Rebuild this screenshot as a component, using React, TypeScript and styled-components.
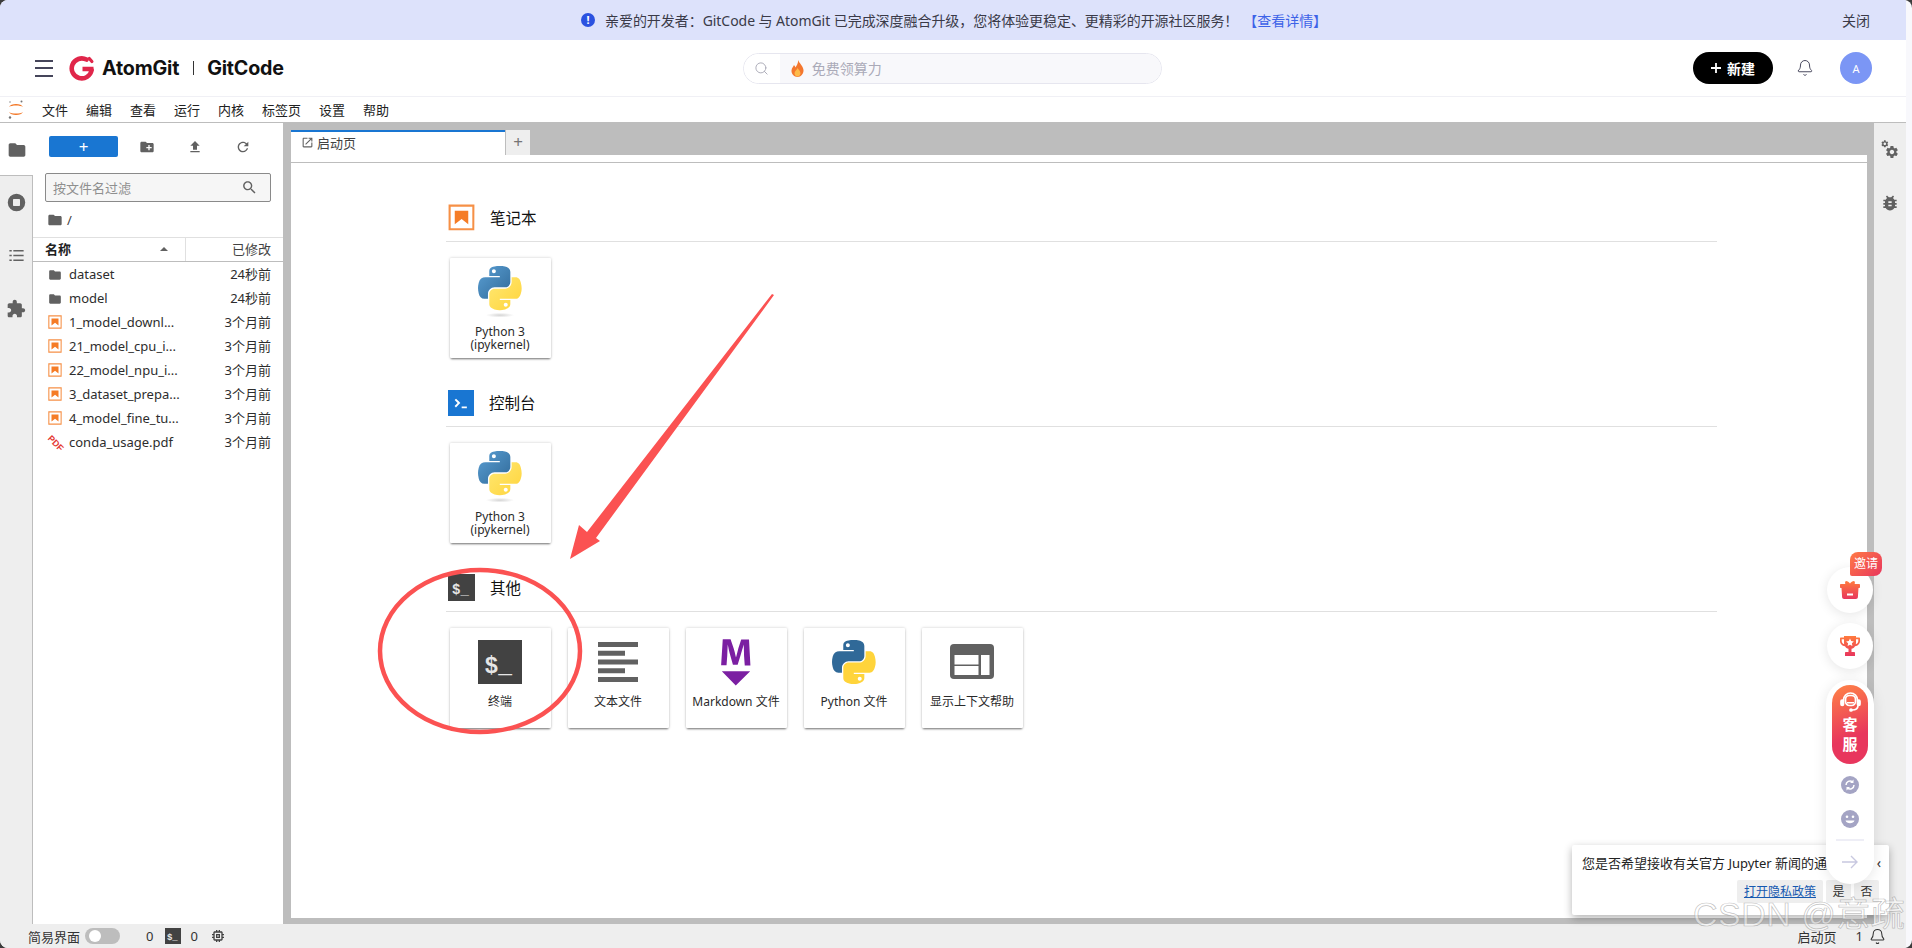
import React from 'react';
import styled, { createGlobalStyle } from 'styled-components';
import { Bell, Search } from 'lucide-react';

const FONT = '"Noto Sans", "Noto Sans CJK SC", sans-serif';

const GlobalStyle = createGlobalStyle`
  html, body {
    margin: 0;
    padding: 0;
    background: #3c3c3c;
  }
  #root {
    width: 1912px;
    height: 948px;
    overflow: hidden;
    border-radius: 8px;
  }
`;

const Page = styled.div`
  position: relative;
  width: 1912px;
  height: 948px;
  box-sizing: border-box;
  padding-right: 6px;
  background: #f8f8fc;
  font-family: ${FONT};
  color: #212121;
  display: flex;
  flex-direction: column;
  overflow: hidden;
`;

const Banner = styled.div`
  height: 40px;
  flex: none;
  background: #dde2fb;
  display: flex;
  align-items: center;
  box-sizing: border-box;
  padding: 0 36px 0 581px;
  font-size: 14px;
  letter-spacing: -0.05px;
  color: #3a3a48;
`;

const BannerDot = styled.span`
  width: 14px;
  height: 14px;
  border-radius: 50%;
  background: #2b52e0;
  color: #fff;
  font-size: 11px;
  font-weight: 700;
  line-height: 14px;
  text-align: center;
  margin-right: 10px;
`;

const BannerLink = styled.span`
  color: #3d63e8;
  margin-left: 5px;
`;

const BannerClose = styled.span`
  margin-left: auto;
`;

const Header = styled.header`
  height: 57px;
  flex: none;
  background: #fff;
  border-bottom: 1px solid #f0f0f5;
  box-sizing: border-box;
  display: flex;
  align-items: center;
  padding: 0 34px 0 35px;
`;

const Burger = styled.div`
  width: 18px;
  height: 17px;
  border-top: 2px solid #45455a;
  border-bottom: 2px solid #45455a;
  position: relative;
  box-sizing: border-box;
  margin-right: 16px;
  &::after {
    content: '';
    position: absolute;
    left: 0;
    right: 0;
    top: 5.5px;
    height: 2px;
    background: #45455a;
  }
`;

const LogoMark = styled.span`
  display: flex;
  margin-right: 7px;
`;

const Brand = styled.span`
  font-family: Inter, sans-serif;
  font-weight: 700;
  font-size: 19.7px;
  letter-spacing: -0.2px;
  color: #111;
`;

const BrandDivider = styled.span`
  width: 1px;
  height: 14px;
  background: #333;
  margin: 0 13px 0 14px;
`;

const SearchPill = styled.div`
  width: 419px;
  height: 31px;
  margin-left: 459px;
  border: 1px solid #e6e6ef;
  border-radius: 16px;
  box-sizing: border-box;
  overflow: hidden;
  display: flex;
  flex: none;
`;

const SearchLead = styled.div`
  width: 36px;
  flex: none;
  background: #fff;
  display: flex;
  align-items: center;
  justify-content: center;
  color: #a9a9b5;
`;

const SearchField = styled.div`
  flex: 1;
  background: #f8f8fb;
  display: flex;
  align-items: center;
  gap: 8px;
  padding-left: 11px;
  font-size: 14px;
  color: #aaaab8;
`;

const NewButton = styled.div`
  width: 80px;
  height: 32px;
  margin-left: auto;
  border-radius: 16px;
  background: #000;
  color: #fff;
  font-size: 14px;
  font-weight: 700;
  display: flex;
  align-items: center;
  justify-content: center;
  gap: 6px;
`;

const BellWrap = styled.div`
  margin: 0 26px 0 23px;
  color: #45455a;
  display: flex;
`;

const Avatar = styled.div`
  width: 32px;
  height: 32px;
  border-radius: 50%;
  background: #7b96f5;
  color: #fff;
  font-size: 11px;
  display: flex;
  align-items: center;
  justify-content: center;
`;

const MenuBar = styled.nav`
  height: 26px;
  flex: none;
  background: #fff;
  box-sizing: border-box;
  border-bottom: 1px solid #bdbdbd;
  display: flex;
  align-items: center;
  padding-left: 8px;
  font-size: 13px;
`;

const MenuLogo = styled.svg`
  width: 16px;
  height: 21px;
  margin-right: 9px;
  flex: none;
`;

const MenuItem = styled.span`
  padding: 0 9px;
`;

const Workspace = styled.div`
  flex: 1;
  min-height: 0;
  display: flex;
`;

const SideBar = styled.aside<{ $width: number }>`
  width: ${(p) => p.$width}px;
  flex: none;
  background: #eeeeee;
  display: flex;
  flex-direction: column;
`;

const SideTab = styled.div<{ $active?: boolean }>`
  height: 53px;
  display: flex;
  align-items: center;
  justify-content: center;
  box-sizing: border-box;
  color: #616161;
  background: ${(p) => (p.$active ? '#fff' : 'transparent')};
`;

const SideRest = styled.div`
  flex: 1;
  display: flex;
  flex-direction: column;
  border-top: 1px solid #bdbdbd;
  border-right: 1px solid #bdbdbd;
  margin-top: -1px;
`;

const FilePanel = styled.section`
  width: 250px;
  flex: none;
  background: #fff;
  display: flex;
  flex-direction: column;
  font-size: 13px;
`;

const FileToolbar = styled.div`
  display: flex;
  align-items: center;
  height: 21px;
  margin: 13px 0 0 16px;
  color: #616161;
`;

const BlueButton = styled.div`
  width: 72px;
  height: 21px;
  border-radius: 2px;
  background: #1976d2;
  color: #fff;
  font-size: 17px;
  line-height: 21px;
  text-align: center;
  margin-right: 21px;
`;

const ToolIcon = styled.div`
  width: 16px;
  height: 16px;
  margin-right: 32px;
  display: flex;
`;

const FilterBox = styled.div`
  height: 29px;
  margin: 16px 12px 0 12px;
  box-sizing: border-box;
  border: 1px solid #8a8a8a;
  border-radius: 2px;
  background: #f6f6f6;
  color: #8f8f8f;
  display: flex;
  align-items: center;
  justify-content: space-between;
  padding: 0 12px 0 7px;
`;

const Crumbs = styled.div`
  height: 35px;
  display: flex;
  align-items: center;
  padding-left: 14px;
  gap: 4px;
  color: #424242;
`;

const ListHead = styled.div`
  height: 25px;
  flex: none;
  box-sizing: border-box;
  border-top: 1px solid #e0e0e0;
  border-bottom: 1px solid #bdbdbd;
  display: grid;
  grid-template-columns: 153px 1fr;
  align-items: center;
`;

const NameHead = styled.div`
  height: 100%;
  box-sizing: border-box;
  padding: 0 20px 2px 12px;
  font-weight: 700;
  border-right: 1px solid #e0e0e0;
  display: flex;
  align-items: center;
  justify-content: space-between;
`;

const Caret = styled.span`
  width: 0;
  height: 0;
  border-left: 4px solid transparent;
  border-right: 4px solid transparent;
  border-bottom: 4px solid #616161;
  margin-right: -3px;
`;

const DateHead = styled.div`
  text-align: right;
  padding: 0 12px 2px 0;
  color: #424242;
`;

const Row = styled.div`
  height: 24px;
  box-sizing: border-box;
  display: flex;
  align-items: center;
  padding: 0 12px 1px 15px;
  color: #2d2d2d;
`;

const RowIcon = styled.span`
  width: 14px;
  height: 14px;
  flex: none;
  margin-right: 7px;
  display: flex;
`;

const RowDate = styled.span`
  margin-left: auto;
`;

const Dock = styled.main`
  flex: 1;
  min-width: 0;
  background: #bdbdbd;
  display: flex;
  flex-direction: column;
  padding: 0 7px 6px 8px;
`;

const TabBar = styled.div`
  height: 32px;
  flex: none;
  box-sizing: border-box;
  padding-top: 7px;
  display: flex;
`;

const Tab = styled.div`
  width: 214px;
  box-sizing: border-box;
  background: #fff;
  border-top: 2px solid #1976d2;
  display: flex;
  align-items: center;
  padding: 0 0 2px 10px;
  gap: 3px;
  font-size: 13px;
  color: #424242;
`;

const AddTab = styled.div`
  width: 25px;
  background: #eeeeee;
  border-left: 1px solid #bdbdbd;
  box-sizing: border-box;
  color: #757575;
  font-size: 17px;
  line-height: 24px;
  text-align: center;
`;

const LauncherPage = styled.div`
  flex: 1;
  background: #fff;
  padding-top: 7px;
  display: flex;
  min-height: 0;
`;

const LauncherBody = styled.div`
  flex: 1;
  border-top: 1px solid #bdbdbd;
  padding: 41px 150px 0 155px;
`;

const Section = styled.section`
  margin-bottom: 31px;
`;

const SectionHead = styled.div`
  height: 27px;
  padding: 0 0 10px 2px;
  border-bottom: 1px solid #e0e0e0;
  display: flex;
  align-items: center;
  gap: 15px;
  font-size: 15.5px;
  color: #111;
`;

const CardRow = styled.div`
  display: flex;
  gap: 17px;
  margin: 16px 0 0 3.5px;
`;

const Card = styled.div`
  width: 101px;
  height: 100px;
  box-sizing: border-box;
  background: #fff;
  border-radius: 1px;
  box-shadow: 0 2px 2px -1px rgba(0, 0, 0, 0.5), 0 0 3px rgba(0, 0, 0, 0.22);
  display: flex;
  flex-direction: column;
  align-items: center;
`;

const CardArt = styled.div<{ $top: number }>`
  height: 67px;
  flex: none;
  box-sizing: border-box;
  padding-top: ${(p) => p.$top}px;
  display: flex;
  justify-content: center;
`;

const CardLabel = styled.div`
  font-size: 12px;
  line-height: 13px;
  text-align: center;
  white-space: nowrap;
  color: #2a2a2a;
`;

const StatusBar = styled.footer`
  height: 24px;
  flex: none;
  background: #eeeeee;
  display: flex;
  align-items: center;
  padding: 0 20px 0 28px;
  font-size: 13px;
  color: #333;
`;

const Toggle = styled.span`
  width: 35px;
  height: 16px;
  border-radius: 8px;
  background: #bdbdbd;
  margin: 0 26px 0 5px;
  padding: 2px 0 0 4px;
  box-sizing: border-box;
  &::before {
    content: '';
    display: block;
    width: 12px;
    height: 12px;
    border-radius: 50%;
    background: #fff;
  }
`;

const StatusIcon = styled.span`
  width: 16px;
  height: 16px;
  margin: 0 9px 0 12px;
  display: flex;
`;

const StatusRight = styled.div`
  margin-left: auto;
  display: flex;
  align-items: center;
`;

const StatusCount = styled.span`
  margin: 0 6px 0 19px;
`;

const AnnotationLayer = styled.svg`
  position: absolute;
  left: 0;
  top: 0;
  pointer-events: none;
`;

const FloatColumn = styled.div`
  position: absolute;
  top: 567px;
  right: 38px;
  width: 48px;
  display: flex;
  flex-direction: column;
  align-items: center;
  gap: 10px;
  z-index: 3;
`;

const FloatCircle = styled.div`
  position: relative;
  width: 46px;
  height: 46px;
  border-radius: 50%;
  background: #fff;
  box-shadow: 0 2px 12px rgba(0, 0, 0, 0.1);
  display: flex;
  align-items: center;
  justify-content: center;
`;

const InviteBadge = styled.span`
  position: absolute;
  top: -15px;
  right: -9px;
  width: 32px;
  height: 24px;
  border-radius: 8px 8px 8px 2px;
  background: linear-gradient(135deg, #ff7a45, #e8365d);
  color: #fff;
  font-size: 12px;
  line-height: 24px;
  text-align: center;
`;

const FloatPill = styled.div`
  width: 48px;
  height: 204px;
  margin-top: 1px;
  box-sizing: border-box;
  padding-top: 5px;
  border-radius: 24px;
  background: #fff;
  box-shadow: 0 2px 14px rgba(0, 0, 0, 0.1);
  display: flex;
  flex-direction: column;
  align-items: center;
`;

const ServiceButton = styled.div`
  width: 36px;
  height: 79px;
  flex: none;
  box-sizing: border-box;
  padding-top: 7px;
  border-radius: 18px;
  background: linear-gradient(160deg, #ff8347, #e8365d 65%);
  color: #fff;
  font-size: 15px;
  font-weight: 700;
  line-height: 20px;
  text-align: center;
  display: flex;
  flex-direction: column;
  align-items: center;
`;

const ServiceText = styled.span`
  margin-top: 2px;
`;

const PillIcon = styled.div<{ $top: number }>`
  margin-top: ${(p) => p.$top}px;
  display: flex;
`;

const PillRule = styled.div`
  width: 28px;
  height: 2px;
  margin-top: 11px;
  background: #eeeef6;
`;

const Notice = styled.div`
  position: absolute;
  left: 1572px;
  top: 845px;
  width: 317px;
  height: 70px;
  box-sizing: border-box;
  background: #fff;
  border-radius: 2px;
  box-shadow: 0 3px 8px rgba(0, 0, 0, 0.3);
  padding: 9px 10px 0 10px;
  font-size: 13px;
  z-index: 2;
`;

const NoticeText = styled.div`
  white-space: nowrap;
  line-height: 18px;
  color: #222;
`;

const NoticeChevron = styled.span`
  position: absolute;
  right: 8px;
  top: 9px;
  font-size: 14px;
  line-height: 18px;
  color: #333;
`;

const NoticeActions = styled.div`
  display: flex;
  justify-content: flex-end;
  gap: 3px;
  margin-top: 8px;
`;

const NoticeButton = styled.span<{ $link?: boolean }>`
  height: 23px;
  line-height: 23px;
  padding: 0 ${(p) => (p.$link ? 7 : 6.5)}px;
  border-radius: 2px;
  background: #eeeeee;
  font-size: 12px;
  color: ${(p) => (p.$link ? '#1659b0' : '#333')};
  text-decoration: ${(p) => (p.$link ? 'underline' : 'none')};
`;

const Watermark = styled.div`
  position: absolute;
  left: 1693px;
  top: 894px;
  font-family: "Liberation Sans", "Noto Sans CJK SC", sans-serif;
  font-size: 34px;
  line-height: 40px;
  letter-spacing: 0.5px;
  white-space: nowrap;
  color: rgba(255, 255, 255, 0.5);
  -webkit-text-stroke: 0.7px rgba(140, 140, 140, 0.55);
  z-index: 4;
`;

const MdIcon = ({ d, size = 16, color = 'currentColor' }: { d: string; size?: number; color?: string }) => (
  <svg width={size} height={size} viewBox="0 0 24 24" fill={color}>
    <path d={d} />
  </svg>
);

const ICONS = {
  folder: 'M10 4H4c-1.1 0-1.99.9-1.99 2L2 18c0 1.1.9 2 2 2h16c1.1 0 2-.9 2-2V8c0-1.1-.9-2-2-2h-8l-2-2z',
  newFolder:
    'M20 6h-8l-2-2H4c-1.11 0-1.99.89-1.99 2L2 18c0 1.11.89 2 2 2h16c1.11 0 2-.89 2-2V8c0-1.11-.89-2-2-2zm-1 8h-3v3h-2v-3h-3v-2h3V9h2v3h3v2z',
  upload: 'M9 16h6v-6h4l-7-7-7 7h4zm-4 2h14v2H5z',
  refresh:
    'M17.65 6.35C16.2 4.9 14.21 4 12 4c-4.42 0-7.99 3.58-7.99 8s3.57 8 7.99 8c3.73 0 6.84-2.55 7.73-6h-2.08c-.82 2.33-3.04 4-5.65 4-3.31 0-6-2.69-6-6s2.69-6 6-6c1.66 0 3.14.69 4.22 1.78L13 11h7V4l-2.35 2.35z',
  search:
    'M15.5 14h-.79l-.28-.27C15.41 12.59 16 11.11 16 9.5 16 5.91 13.09 3 9.5 3S3 5.91 3 9.5 5.91 16 9.5 16c1.61 0 3.09-.59 4.23-1.57l.27.28v.79l5 4.99L20.49 19l-4.99-5zm-6 0C7.01 14 5 11.99 5 9.5S7.01 5 9.5 5 14 7.01 14 9.5 11.99 14 9.5 14z',
  stop: 'M12 2a10 10 0 1 0 0 20 10 10 0 0 0 0-20zm4 13.2c0 .44-.36.8-.8.8H8.8a.8.8 0 0 1-.8-.8V8.8c0-.44.36-.8.8-.8h6.4c.44 0 .8.36.8.8v6.4z',
  list: 'M8 5h13v2H8zM8 11h13v2H8zM8 17h13v2H8zM3 5h3v2H3zM3 11h3v2H3zM3 17h3v2H3z',
  puzzle:
    'M20.5 11H19V7c0-1.1-.9-2-2-2h-4V3.5C13 2.12 11.88 1 10.5 1S8 2.12 8 3.5V5H4c-1.1 0-1.99.9-1.99 2v3.8H3.5c1.49 0 2.7 1.21 2.7 2.7s-1.21 2.7-2.7 2.7H2V20c0 1.1.9 2 2 2h3.8v-1.5c0-1.49 1.21-2.7 2.7-2.7 1.49 0 2.7 1.21 2.7 2.7V22H17c1.1 0 2-.9 2-2v-4h1.5c1.38 0 2.5-1.12 2.5-2.5S21.88 11 20.5 11z',
  bug: 'M20 8h-2.81c-.45-.78-1.07-1.45-1.82-1.96L17 4.41 15.59 3l-2.17 2.17C12.96 5.06 12.49 5 12 5c-.49 0-.96.06-1.41.17L8.41 3 7 4.41l1.62 1.63C7.88 6.55 7.26 7.22 6.81 8H4v2h2.09c-.05.33-.09.66-.09 1v1H4v2h2v1c0 .34.04.67.09 1H4v2h2.81c1.04 1.79 2.97 3 5.19 3s4.15-1.21 5.19-3H20v-2h-2.09c.05-.33.09-.66.09-1v-1h2v-2h-2v-1c0-.34-.04-.67-.09-1H20V8zm-6 8h-4v-2h4v2zm0-4h-4v-2h4v2z',
  launch:
    'M19 19H5V5h7V3H5c-1.11 0-2 .9-2 2v14c0 1.1.89 2 2 2h14c1.1 0 2-.9 2-2v-7h-2v7zM14 3v2h3.59l-9.83 9.83 1.41 1.41L19 6.41V10h2V3h-7z',
  memory:
    'M15 9H9v6h6V9zm-2 4h-2v-2h2v2zm8-2V9h-2V7c0-1.1-.9-2-2-2h-2V3h-2v2h-2V3H9v2H7c-1.1 0-2 .9-2 2v2H3v2h2v2H3v2h2v2c0 1.1.9 2 2 2h2v2h2v-2h2v2h2v-2h2c1.1 0 2-.9 2-2v-2h2v-2h-2v-2h2zm-4 6H7V7h10v10z',
  gear: 'M19.14 12.94c.04-.3.06-.61.06-.94 0-.32-.02-.64-.07-.94l2.03-1.58a.49.49 0 0 0 .12-.61l-1.92-3.32a.488.488 0 0 0-.59-.22l-2.39.96c-.5-.38-1.03-.7-1.62-.94l-.36-2.54a.484.484 0 0 0-.48-.41h-3.84c-.24 0-.43.17-.47.41l-.36 2.54c-.59.24-1.13.57-1.62.94l-2.39-.96c-.22-.08-.47 0-.59.22L2.74 8.87c-.12.21-.08.47.12.61l2.03 1.58c-.05.3-.09.63-.09.94s.02.64.07.94l-2.03 1.58a.49.49 0 0 0-.12.61l1.92 3.32c.12.22.37.29.59.22l2.39-.96c.5.38 1.03.7 1.62.94l.36 2.54c.05.24.24.41.48.41h3.84c.24 0 .44-.17.47-.41l.36-2.54c.59-.24 1.13-.56 1.62-.94l2.39.96c.22.08.47 0 .59-.22l1.92-3.32c.12-.22.07-.47-.12-.61l-2.01-1.58zM12 15.6c-1.98 0-3.6-1.62-3.6-3.6s1.62-3.6 3.6-3.6 3.6 1.62 3.6 3.6-1.62 3.6-3.6 3.6z',
};

const PY_BLUE =
  'M54.92 0C50.34.02 45.96.41 42.11 1.09 30.76 3.1 28.7 7.29 28.7 15.03v10.22h26.81v3.41H18.64c-7.79 0-14.62 4.68-16.75 13.59-2.46 10.21-2.57 16.59 0 27.25 1.91 7.93 6.46 13.59 14.25 13.59h9.22V70.84c0-8.85 7.66-16.66 16.75-16.66h26.78c7.45 0 13.41-6.14 13.41-13.63V15.03c0-7.26-6.13-12.72-13.41-13.94C64.28.33 59.5-.02 54.92 0zM40.42 8.22c2.77 0 5.03 2.3 5.03 5.12 0 2.82-2.26 5.09-5.03 5.09-2.78 0-5.03-2.28-5.03-5.09 0-2.83 2.25-5.12 5.03-5.12z';
const PY_YELLOW =
  'M85.64 28.66v11.9c0 9.23-7.83 17-16.75 17H42.11c-7.34 0-13.41 6.28-13.41 13.63v25.52c0 7.26 6.32 11.54 13.41 13.62 8.49 2.5 16.63 2.95 26.78 0 6.75-1.95 13.4-5.89 13.4-13.62V86.5H55.51v-3.41H95.7c7.79 0 10.7-5.43 13.41-13.59 2.8-8.39 2.68-16.46 0-27.24-1.93-7.76-5.6-13.6-13.41-13.6zM70.64 93.38c2.78 0 5.03 2.28 5.03 5.09 0 2.83-2.25 5.13-5.03 5.13-2.77 0-5.03-2.3-5.03-5.13 0-2.81 2.26-5.09 5.03-5.09z';

const PythonLogo = ({ id, flat }: { id: string; flat?: boolean }) => (
  <svg width="44" height={flat ? 44 : 52} viewBox={flat ? '0 0 112 112' : '0 0 112 132'}>
    {!flat && (
      <defs>
        <linearGradient id={`${id}b`} x1="0" y1="0" x2="1" y2="1">
          <stop offset="0" stopColor="#5a9fd4" />
          <stop offset="1" stopColor="#306998" />
        </linearGradient>
        <linearGradient id={`${id}y`} x1="1" y1="1" x2="0" y2="0">
          <stop offset="0" stopColor="#ffd43b" />
          <stop offset="1" stopColor="#ffe873" />
        </linearGradient>
        <radialGradient id={`${id}s`}>
          <stop offset="0" stopColor="#b8b8b8" stopOpacity="0.6" />
          <stop offset="1" stopColor="#b8b8b8" stopOpacity="0" />
        </radialGradient>
      </defs>
    )}
    <path d={PY_BLUE} fill={flat ? '#306998' : `url(#${id}b)`} />
    <path d={PY_YELLOW} fill={flat ? '#ffd43b' : `url(#${id}y)`} />
    {!flat && <ellipse cx="56" cy="125" rx="36" ry="6" fill={`url(#${id}s)`} />}
  </svg>
);

const NotebookIcon = ({ size }: { size: number }) => (
  <svg width={size} height={size} viewBox="0 0 22 22" fill="#f57c26">
    <path d="M18.7 3.3v15.4H3.3V3.3h15.4m1.5-1.5H1.8v18.3h18.3l.1-18.3z" transform="translate(-1.6 -1.6) scale(1.145)" opacity="0.85" />
    <path d="M16.5 16.5l-5.4-4.3-5.6 4.3v-11h11z" />
  </svg>
);

const ConsoleIcon = () => (
  <svg width="26" height="26" viewBox="0 0 200 200">
    <rect width="200" height="200" fill="#1976d2" />
    <path fill="#fff" d="M105 127.3h40v12.8h-40zM51.1 77L74 99.9l-23.3 23.3 10.5 10.5 23.3-23.3L95 99.9 84.5 89.4 61.6 66.5z" />
  </svg>
);

const TerminalIcon = ({ w, h, size }: { w: number; h: number; size: number }) => (
  <svg width={w} height={h} viewBox={`0 0 ${w} ${h}`}>
    <rect width={w} height={h} fill="#424242" />
    <text x={w * 0.46} y={h * 0.74} textAnchor="middle" fontFamily="Liberation Mono, monospace" fontWeight="700" fontSize={size} fill="#e6e6e6">
      $_
    </text>
  </svg>
);

const TextFileIcon = () => (
  <svg width="44" height="44" viewBox="0 0 44 44" fill="#616161">
    <rect x="2" y="2" width="40" height="5" />
    <rect x="2" y="10.75" width="27" height="5" />
    <rect x="2" y="19.5" width="40" height="5" />
    <rect x="2" y="28.25" width="27" height="5" />
    <rect x="2" y="37" width="40" height="5" />
  </svg>
);

const MarkdownIcon = () => (
  <svg width="52" height="52" viewBox="0 0 22 22" fill="#7b1fa2">
    <path d="M5 14.9h12l-6.1 6zm9.4-6.8c0-1.3-.1-2.9-.1-4.5-.4 1.4-.9 2.9-1.3 4.3l-1.3 4.3h-2L8.5 7.9c-.4-1.3-.7-2.9-1-4.3-.1 1.6-.1 3.2-.2 4.6L7 12.4H4.7l.7-11h3.3L10 5.2c.4 1.2.7 2.7 1 3.9.3-1.2.7-2.6 1-3.9l1.2-3.7h3.3l.6 11h-2.4l-.3-4.3z" />
  </svg>
);

const HelpIcon = () => (
  <svg width="44" height="44" viewBox="0 0 44 44">
    <rect x="0" y="4" width="44" height="35" rx="4" fill="#616161" />
    <rect x="4.5" y="15" width="24" height="9.5" fill="#fff" />
    <rect x="4.5" y="26" width="24" height="9" fill="#fff" />
    <rect x="31" y="15" width="8.5" height="20" fill="#fff" />
  </svg>
);

const PdfIcon = () => (
  <svg width="16" height="16" viewBox="0 0 16 16" overflow="visible">
    <text x="8" y="11.5" textAnchor="middle" fontFamily="Liberation Sans, sans-serif" fontWeight="700" fontSize="9" fill="#e53935" transform="rotate(45 8 8)">
      PDF
    </text>
  </svg>
);

const GearsIcon = () => (
  <svg width="18" height="20" viewBox="0 0 18 20" fill="#616161">
    <g transform="translate(3.5 4.5) scale(0.62)">
      <path d={ICONS.gear} />
    </g>
    <g transform="translate(-0.5 -0.5) scale(0.36)">
      <path d={ICONS.gear} />
    </g>
  </svg>
);

const GLogo = () => (
  <svg width="26" height="25" viewBox="0 0 26 25" fill="none" stroke="#e0264a" strokeWidth="4.6" strokeLinecap="round">
    <path d="M17.5 3.6A10 10 0 1 0 22.6 14" />
    <path d="M13.5 13h11" strokeLinecap="butt" />
    <path d="M20.3 2.5l2.6 3" strokeWidth="3.2" />
  </svg>
);

const JupyterMark = () => (
  <MenuLogo viewBox="0 0 16 21">
    <path d="M1 8c1.5-4 12.5-4 14 0-2.5-2-11.5-2-14 0z" fill="#f37726" />
    <path d="M1 13c1.5 4 12.5 4 14 0-2.5 2-11.5 2-14 0z" fill="#f37726" />
    <circle cx="13.5" cy="2.5" r="1" fill="#757575" />
    <circle cx="2" cy="18.5" r="1.2" fill="#757575" />
    <circle cx="2" cy="3" r="0.7" fill="#757575" />
  </MenuLogo>
);

const Flame = () => (
  <svg width="13" height="17" viewBox="0 0 13 17">
    <path d="M7 0c1 3 5 5.5 5.5 10 .3 3.5-2.5 7-6 7S.3 14 .5 10.5C.7 8 2.3 7 3 5c.8 1 1.2 1.5 1.5 2.5C5.5 5.5 7.5 3 7 0z" fill="#f4772e" />
    <path d="M6.7 8c.5 1.5 2.8 3 2.8 5.3 0 1.7-1.3 3.2-3 3.2s-3-1.5-3-3.2C3.5 11 6 10 6.7 8z" fill="#fdbb4a" />
  </svg>
);

const PlusGlyph = () => (
  <svg width="10" height="10" viewBox="0 0 10 10" fill="#fff">
    <path d="M4.1 0h1.8v4.1H10v1.8H5.900V10H4.1V5.900H0V4.100h4.100z" />
  </svg>
);

const dockGradient = (id: string) => (
  <defs>
    <linearGradient id={id} x1="0" y1="0" x2="0" y2="1">
      <stop offset="0" stopColor="#ff7a3d" />
      <stop offset="1" stopColor="#e8365d" />
    </linearGradient>
  </defs>
);

const GiftIcon = () => (
  <svg width="20" height="18" viewBox="0 0 20 18">
    {dockGradient('gift')}
    <path d="M6 0c1.5 0 3 1 4 2.5C11 1 12.5 0 14 0c1 .5 1.2 2 .6 3H19c.6 0 1 .4 1 1v2c0 .6-.4 1-1 1h-.5l-.6 9c0 1.1-.9 2-2 2H4.100c-1.100 0-2-.9-2-2l-.6-9H1c-.6 0-1-.4-1-1V4c0-.6.4-1 1-1h4.400C4.800 2 5 .5 6 0z" fill="url(#gift)" />
    <rect x="7" y="12.5" width="6" height="2" fill="#fff" />
  </svg>
);

const TrophyIcon = () => (
  <svg width="20" height="20" viewBox="0 0 20 20">
    {dockGradient('cup')}
    <path d="M4 0h12v1.5h3c.6 0 1 .4 1 1V5c0 2.8-2.2 5-5 5.3-.8 1.3-2 2.2-3.5 2.5V16H14c.6 0 1 .4 1 1v3H5v-3c0-.6.4-1 1-1h2.500v-3.200C7 12.500 5.800 11.600 5 10.300 2.200 10 0 7.800 0 5V2.500c0-.6.4-1 1-1h3zM1.700 3.200V5c0 1.500 1 2.800 2.500 3.300-.1-.5-.2-1-.2-1.500V3.200zm16.600 0H16v3.600c0 .5-.1 1-.2 1.500 1.500-.5 2.500-1.800 2.500-3.300z" fill="url(#cup)" />
    <path d="M10 2.5l1.2 2.5 2.7.4-2 1.900.5 2.700-2.400-1.300-2.400 1.300.5-2.700-2-1.900 2.700-.4z" fill="#fff" />
  </svg>
);

const HeadsetIcon = () => (
  <svg width="21" height="20" viewBox="0 0 21 20" fill="none" stroke="#fff" strokeWidth="1.7">
    <path d="M3.5 9V8a7 7 0 0 1 14 0v1" />
    <rect x="5.5" y="3.5" width="10" height="10" rx="4" />
    <rect x="1" y="8" width="2.5" height="5.5" rx="1.2" fill="#fff" />
    <rect x="17.5" y="8" width="2.5" height="5.5" rx="1.2" fill="#fff" />
    <path d="M18 13.5c0 3-2.500 4.500-6 4.500" />
    <circle cx="11" cy="18" r="1" fill="#fff" />
    <rect x="7" y="10" width="7" height="1.5" fill="#fff" stroke="none" />
  </svg>
);

const LoopIcon = () => (
  <svg width="18" height="18" viewBox="0 0 18 18">
    <circle cx="9" cy="9" r="9" fill="#a4a4c4" />
    <path d="M5 9a4 4 0 0 1 6.5-3.100" fill="none" stroke="#fff" strokeWidth="1.5" />
    <path d="M13 9a4 4 0 0 1-6.5 3.100" fill="none" stroke="#fff" strokeWidth="1.5" />
    <path d="M12.5 3.5v3.5H9zM5.5 14.5V11H9z" fill="#fff" />
  </svg>
);

const SmileIcon = () => (
  <svg width="18" height="18" viewBox="0 0 18 18">
    <circle cx="9" cy="9" r="9" fill="#a4a4c4" />
    <circle cx="6" cy="6.8" r="1.3" fill="#fff" />
    <circle cx="12" cy="6.8" r="1.3" fill="#fff" />
    <path d="M4.5 10.5c1 3.500 8 3.500 9 0z" fill="#fff" />
  </svg>
);

const ArrowIcon = () => (
  <svg width="16" height="14" viewBox="0 0 16 14" fill="none" stroke="#c8c8e0" strokeWidth="1.4">
    <path d="M0 7h15M9 1l6 6-6 6" />
  </svg>
);

const FILES = [
  { name: 'dataset', date: '24秒前', kind: 'dir' },
  { name: 'model', date: '24秒前', kind: 'dir' },
  { name: '1_model_downl...', date: '3个月前', kind: 'nb' },
  { name: '21_model_cpu_i...', date: '3个月前', kind: 'nb' },
  { name: '22_model_npu_i...', date: '3个月前', kind: 'nb' },
  { name: '3_dataset_prepa...', date: '3个月前', kind: 'nb' },
  { name: '4_model_fine_tu...', date: '3个月前', kind: 'nb' },
  { name: 'conda_usage.pdf', date: '3个月前', kind: 'pdf' },
];

const MENUS = ['文件', '编辑', '查看', '运行', '内核', '标签页', '设置', '帮助'];

const App = () => (
  <>
    <GlobalStyle />
    <Page>
      <Banner>
        <BannerDot>!</BannerDot>
        亲爱的开发者：GitCode 与 AtomGit 已完成深度融合升级，您将体验更稳定、更精彩的开源社区服务！
        <BannerLink>【查看详情】</BannerLink>
        <BannerClose>关闭</BannerClose>
      </Banner>

      <Header>
        <Burger />
        <LogoMark>
          <GLogo />
        </LogoMark>
        <Brand>AtomGit</Brand>
        <BrandDivider />
        <Brand>GitCode</Brand>
        <SearchPill>
          <SearchLead>
            <Search size={15} strokeWidth={1.5} />
          </SearchLead>
          <SearchField>
            <Flame />
            免费领算力
          </SearchField>
        </SearchPill>
        <NewButton>
          <PlusGlyph />
          新建
        </NewButton>
        <BellWrap>
          <Bell size={18} strokeWidth={1.3} />
        </BellWrap>
        <Avatar>A</Avatar>
      </Header>

      <MenuBar>
        <JupyterMark />
        {MENUS.map((m) => (
          <MenuItem key={m}>{m}</MenuItem>
        ))}
      </MenuBar>

      <Workspace>
        <SideBar $width={33}>
          <SideTab $active>
            <MdIcon d={ICONS.folder} size={20} />
          </SideTab>
          <SideRest>
            <SideTab>
              <MdIcon d={ICONS.stop} size={21} />
            </SideTab>
            <SideTab>
              <MdIcon d={ICONS.list} size={19} />
            </SideTab>
            <SideTab>
              <MdIcon d={ICONS.puzzle} size={20} />
            </SideTab>
          </SideRest>
        </SideBar>

        <FilePanel>
          <FileToolbar>
            <BlueButton>+</BlueButton>
            <ToolIcon>
              <MdIcon d={ICONS.newFolder} />
            </ToolIcon>
            <ToolIcon>
              <MdIcon d={ICONS.upload} />
            </ToolIcon>
            <ToolIcon>
              <MdIcon d={ICONS.refresh} />
            </ToolIcon>
          </FileToolbar>
          <FilterBox>
            按文件名过滤
            <MdIcon d={ICONS.search} size={17} color="#616161" />
          </FilterBox>
          <Crumbs>
            <MdIcon d={ICONS.folder} size={16} color="#616161" />/
          </Crumbs>
          <ListHead>
            <NameHead>
              名称
              <Caret />
            </NameHead>
            <DateHead>已修改</DateHead>
          </ListHead>
          {FILES.map((f) => (
            <Row key={f.name}>
              <RowIcon>
                {f.kind === 'dir' && <MdIcon d={ICONS.folder} size={16} color="#616161" />}
                {f.kind === 'nb' && <NotebookIcon size={14} />}
                {f.kind === 'pdf' && <PdfIcon />}
              </RowIcon>
              {f.name}
              <RowDate>{f.date}</RowDate>
            </Row>
          ))}
        </FilePanel>

        <Dock>
          <TabBar>
            <Tab>
              <MdIcon d={ICONS.launch} size={13} color="#616161" />
              启动页
            </Tab>
            <AddTab>+</AddTab>
          </TabBar>
          <LauncherPage>
            <LauncherBody>
              <Section>
                <SectionHead>
                  <NotebookIcon size={27} />
                  笔记本
                </SectionHead>
                <CardRow>
                  <Card>
                    <CardArt $top={8}>
                      <PythonLogo id="nb" />
                    </CardArt>
                    <CardLabel>
                      Python 3
                      <br />
                      (ipykernel)
                    </CardLabel>
                  </Card>
                </CardRow>
              </Section>
              <Section>
                <SectionHead>
                  <ConsoleIcon />
                  控制台
                </SectionHead>
                <CardRow>
                  <Card>
                    <CardArt $top={8}>
                      <PythonLogo id="con" />
                    </CardArt>
                    <CardLabel>
                      Python 3
                      <br />
                      (ipykernel)
                    </CardLabel>
                  </Card>
                </CardRow>
              </Section>
              <Section>
                <SectionHead>
                  <TerminalIcon w={27} h={27} size={14} />
                  其他
                </SectionHead>
                <CardRow>
                  <Card>
                    <CardArt $top={12}>
                      <TerminalIcon w={44} h={44} size={23} />
                    </CardArt>
                    <CardLabel>终端</CardLabel>
                  </Card>
                  <Card>
                    <CardArt $top={12}>
                      <TextFileIcon />
                    </CardArt>
                    <CardLabel>文本文件</CardLabel>
                  </Card>
                  <Card>
                    <CardArt $top={8}>
                      <MarkdownIcon />
                    </CardArt>
                    <CardLabel>Markdown 文件</CardLabel>
                  </Card>
                  <Card>
                    <CardArt $top={12}>
                      <PythonLogo id="py" flat />
                    </CardArt>
                    <CardLabel>Python 文件</CardLabel>
                  </Card>
                  <Card>
                    <CardArt $top={12}>
                      <HelpIcon />
                    </CardArt>
                    <CardLabel>显示上下文帮助</CardLabel>
                  </Card>
                </CardRow>
              </Section>
            </LauncherBody>
          </LauncherPage>
        </Dock>

        <SideBar $width={32}>
          <SideTab>
            <GearsIcon />
          </SideTab>
          <SideTab>
            <MdIcon d={ICONS.bug} size={20} />
          </SideTab>
        </SideBar>
      </Workspace>

      <StatusBar>
        简易界面
        <Toggle />0
        <StatusIcon>
          <TerminalIcon w={16} h={16} size={9} />
        </StatusIcon>
        0
        <StatusIcon>
          <MdIcon d={ICONS.memory} size={16} color="#424242" />
        </StatusIcon>
        <StatusRight>
          启动页
          <StatusCount>1</StatusCount>
          <Bell size={17} strokeWidth={1.5} color="#333" />
        </StatusRight>
      </StatusBar>

      <AnnotationLayer width="1912" height="948" viewBox="0 0 1912 948">
        <ellipse cx="480" cy="651" rx="100" ry="81" fill="none" stroke="#fb5252" strokeWidth="4.5" />
        <polygon points="774,295 596,538 600,541 570,559 579,525 587,532 772,294" fill="#fb5252" />
      </AnnotationLayer>

      <Notice>
        <NoticeText>您是否希望接收有关官方 Jupyter 新闻的通</NoticeText>
        <NoticeChevron>‹</NoticeChevron>
        <NoticeActions>
          <NoticeButton $link>打开隐私政策</NoticeButton>
          <NoticeButton>是</NoticeButton>
          <NoticeButton>否</NoticeButton>
        </NoticeActions>
      </Notice>

      <FloatColumn>
        <FloatCircle>
          <InviteBadge>邀请</InviteBadge>
          <GiftIcon />
        </FloatCircle>
        <FloatCircle>
          <TrophyIcon />
        </FloatCircle>
        <FloatPill>
          <ServiceButton>
            <HeadsetIcon />
            <ServiceText>
              客
              <br />服
            </ServiceText>
          </ServiceButton>
          <PillIcon $top={12}>
            <LoopIcon />
          </PillIcon>
          <PillIcon $top={16}>
            <SmileIcon />
          </PillIcon>
          <PillRule />
          <PillIcon $top={14}>
            <ArrowIcon />
          </PillIcon>
        </FloatPill>
      </FloatColumn>

      <Watermark>CSDN @意疏</Watermark>
    </Page>
  </>
);

export default App;
